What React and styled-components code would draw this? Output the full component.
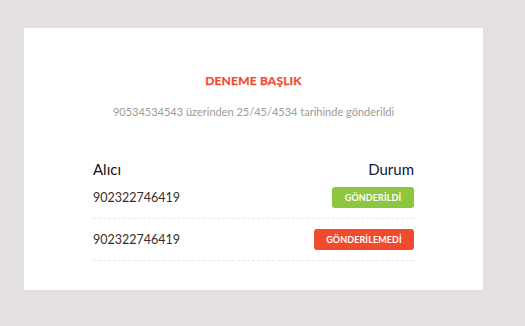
import React from "react";
import styled, { createGlobalStyle } from "styled-components";

const Global = createGlobalStyle`
  html, body { margin: 0; padding: 0; background: #e4e0df; }
  body { font-family: "Lato", "Open Sans", sans-serif; }
`;

const Page = styled.div`
  padding: 28px 0 0 24px;
  min-height: 326px;
  box-sizing: border-box;
`;

const Card = styled.div`
  width: 459px;
  height: 262px;
  background: #fff;
  box-sizing: border-box;
  padding-top: 45px;
  display: flex;
  flex-direction: column;
  align-items: center;
`;

const Title = styled.div`
  color: #f04a2f;
  font-weight: 700;
  font-size: 12px;
  line-height: 16px;
  letter-spacing: 0.2px;
  -webkit-text-stroke: 0.25px #f04a2f;
`;

const Subtitle = styled.div`
  margin-top: 15px;
  color: #9b9b9b;
  font-size: 11px;
  line-height: 16px;
`;

const Table = styled.div`
  width: 321px;
  margin-top: 41px;
`;

const Head = styled.div`
  display: flex;
  justify-content: space-between;
  font-size: 15px;
  line-height: 16px;
`;

const HeadCell = styled.span`
  color: ${(p) => p.$color};
`;

const Row = styled.div`
  display: flex;
  justify-content: space-between;
  align-items: center;
  height: 41px;
  border-bottom: 1px dashed #e8e8e8;
`;

const Phone = styled.span`
  font-size: 12.5px;
  color: #3d2b2b;
`;

const Badge = styled.span`
  display: inline-flex;
  align-items: center;
  justify-content: center;
  width: ${(p) => p.$w}px;
  height: 21px;
  border-radius: 3px;
  background: ${(p) => p.$bg};
  color: #fff;
  font-size: 9px;
  font-weight: 700;
  letter-spacing: 0.1px;
`;

const rows = [
  { phone: "902322746419", label: "GÖNDERİLDİ", bg: "#8dc63f", w: 82 },
  { phone: "902322746419", label: "GÖNDERİLEMEDİ", bg: "#f04a2f", w: 100 },
];

export default function App() {
  return (
    <>
      <Global />
      <Page>
        <Card>
          <Title>DENEME BAŞLIK</Title>
          <Subtitle>90534534543 üzerinden 25/45/4534 tarihinde gönderildi</Subtitle>
          <Table>
            <Head>
              <HeadCell $color="#111">Alıcı</HeadCell>
              <HeadCell $color="#0f1733">Durum</HeadCell>
            </Head>
            {rows.map((r, i) => (
              <Row key={i}>
                <Phone>{r.phone}</Phone>
                <Badge $bg={r.bg} $w={r.w}>{r.label}</Badge>
              </Row>
            ))}
          </Table>
        </Card>
      </Page>
    </>
  );
}
